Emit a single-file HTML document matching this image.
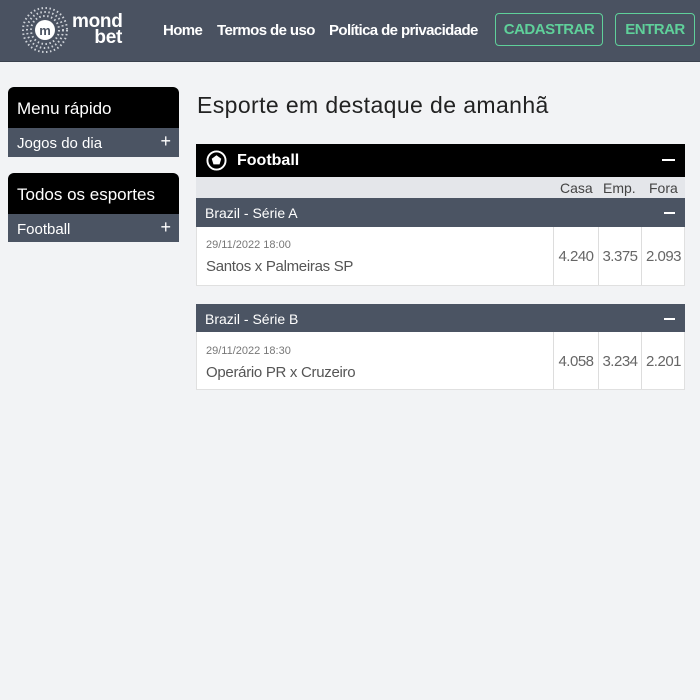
<!DOCTYPE html><html><head><style>
*{margin:0;padding:0;box-sizing:border-box}
body{width:700px;height:700px;background:#f2f3f5;font-family:"Liberation Sans",sans-serif;position:relative;overflow:hidden}
.hdr{position:absolute;left:0;top:0;width:700px;height:62px;background:#4a5261;border-bottom:1px solid #3a414d}
.nav{position:absolute;top:22px;color:#fff;font-size:15px;font-weight:bold;letter-spacing:-0.6px}
.btn{position:absolute;top:13px;height:33px;border:1px solid #5fd09a;border-radius:4px;color:#5fd09a;font-size:15px;font-weight:bold;letter-spacing:-0.5px;line-height:31px;text-align:center}
.abs{position:absolute}
.blk{background:#000;color:#fff}
.gr{background:#4b5463;color:#fff}
.plus{position:absolute;right:8px;font-size:18px;color:#fff}
.cell{position:absolute;top:0;height:100%;border-left:1px solid #ddd;color:#666;font-size:15px;letter-spacing:-0.5px;text-align:center}
</style></head><body>
<div class="hdr">
<svg class="abs" style="left:18px;top:5px" width="55" height="50" viewBox="0 0 55 50">
<circle cx="27" cy="25" r="10" fill="#fff"/>
<g fill="none" stroke="#cfd3d9" stroke-width="2" stroke-dasharray="1.5 2.5">
<circle cx="27" cy="25" r="14"/><circle cx="27" cy="25" r="18"/><circle cx="27" cy="25" r="22"/>
</g>
<text x="27" y="30" text-anchor="middle" font-size="13" font-weight="bold" fill="#4a5261" font-family="Liberation Sans">m</text>
</svg>
<div class="abs" style="left:72px;top:14px;color:#fff;font-weight:bold;font-size:19px;line-height:16px;text-align:right;width:50px;letter-spacing:-0.3px">mond<br>bet</div>
<div class="nav" style="left:163px">Home</div>
<div class="nav" style="left:217px">Termos de uso</div>
<div class="nav" style="left:329px">Política de privacidade</div>
<div class="btn" style="left:495px;width:108px">CADASTRAR</div>
<div class="btn" style="left:615px;width:80px">ENTRAR</div>
</div>

<div class="abs blk" style="left:8px;top:87px;width:171px;height:41px;border-radius:6px 6px 0 0;font-size:17px;padding:12px 0 0 9px">Menu rápido</div>
<div class="abs gr" style="left:8px;top:128px;width:171px;height:29px;font-size:15px;padding:7px 0 0 9px">Jogos do dia<span class="plus" style="top:3px">+</span></div>
<div class="abs blk" style="left:8px;top:173px;width:171px;height:41px;border-radius:6px 6px 0 0;font-size:17px;padding:12px 0 0 9px">Todos os esportes</div>
<div class="abs gr" style="left:8px;top:214px;width:171px;height:28px;font-size:15px;padding:7px 0 0 9px">Football<span class="plus" style="top:3px">+</span></div>

<div class="abs" style="left:197px;top:92px;font-size:23px;color:#222;letter-spacing:0.4px">Esporte em destaque de amanhã</div>

<div class="abs blk" style="left:196px;top:144px;width:489px;height:33px">
<svg class="abs" style="left:10px;top:6px" width="21" height="21" viewBox="0 0 22 22"><circle cx="11" cy="11" r="9.5" fill="none" stroke="#fff" stroke-width="2"/><polygon points="11,5.5 16,9.2 14.2,15 7.8,15 6,9.2" fill="#fff"/></svg>
<div class="abs" style="left:41px;top:8px;font-size:16px;font-weight:bold">Football</div>
<div class="abs" style="right:10px;top:15px;width:13px;height:2px;background:#fff"></div>
</div>
<div class="abs" style="left:196px;top:177px;width:489px;height:21px;background:#e4e6ea;color:#444;font-size:14px">
<span class="abs" style="left:364px;top:3px">Casa</span><span class="abs" style="left:407px;top:3px">Emp.</span><span class="abs" style="left:453px;top:3px">Fora</span></div>

<div class="abs gr" style="left:196px;top:198px;width:489px;height:29px;font-size:14px;padding:7px 0 0 9px">Brazil - Série A<div class="abs" style="right:10px;top:14px;width:11px;height:1.5px;background:#fff"></div></div>
<div class="abs" style="left:196px;top:227px;width:489px;height:59px;background:#fff;border:1px solid #e0e0e0;border-top:none">
<div class="abs" style="left:9px;top:12px;font-size:11px;color:#777">29/11/2022 18:00</div>
<div class="abs" style="left:9px;top:31px;font-size:15px;color:#555;letter-spacing:-0.3px">Santos x Palmeiras SP</div>
<div class="cell" style="left:356px;width:45px;padding-top:21px">4.240</div>
<div class="cell" style="left:401px;width:43px;padding-top:21px">3.375</div>
<div class="cell" style="left:444px;width:44px;padding-top:21px">2.093</div>
</div>

<div class="abs gr" style="left:196px;top:304px;width:489px;height:28px;font-size:14px;padding:7px 0 0 9px">Brazil - Série B<div class="abs" style="right:10px;top:14px;width:11px;height:1.5px;background:#fff"></div></div>
<div class="abs" style="left:196px;top:332px;width:489px;height:58px;background:#fff;border:1px solid #e0e0e0;border-top:none">
<div class="abs" style="left:9px;top:13px;font-size:11px;color:#777">29/11/2022 18:30</div>
<div class="abs" style="left:9px;top:32px;font-size:15px;color:#555;letter-spacing:-0.3px">Operário PR x Cruzeiro</div>
<div class="cell" style="left:356px;width:45px;padding-top:21px">4.058</div>
<div class="cell" style="left:401px;width:43px;padding-top:21px">3.234</div>
<div class="cell" style="left:444px;width:44px;padding-top:21px">2.201</div>
</div>
</body></html>
